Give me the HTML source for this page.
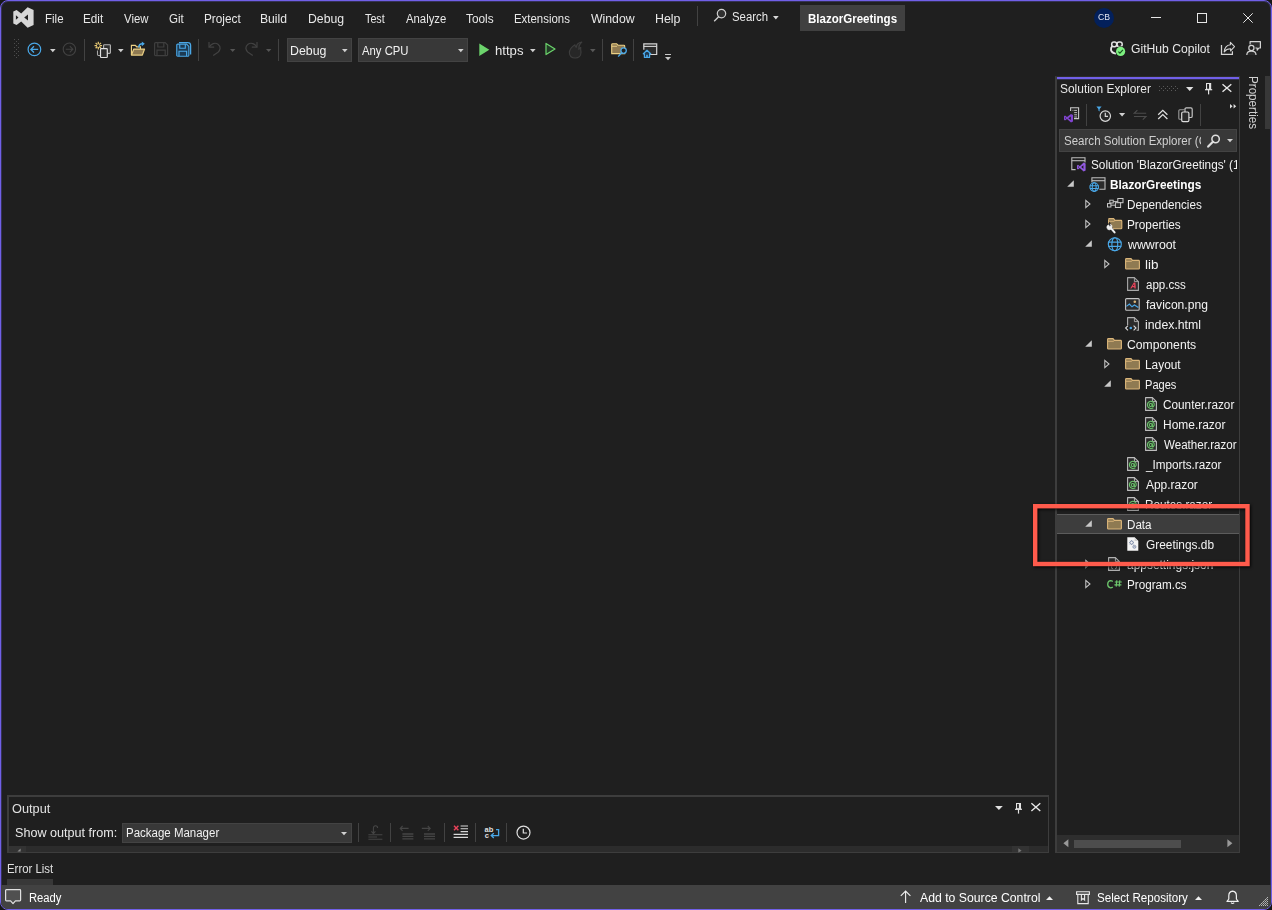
<!DOCTYPE html>
<html lang="en"><head><meta charset="utf-8"><title>BlazorGreetings - Microsoft Visual Studio</title>
<style>
html,body{margin:0;padding:0;background:#171717;}
body{width:1272px;height:910px;position:relative;overflow:hidden;font-family:"Liberation Sans",sans-serif;}
.r{position:absolute;display:block;box-sizing:border-box;}
.t{position:absolute;display:block;white-space:pre;line-height:20px;height:20px;transform-origin:0 50%;}
.clip{position:absolute;height:20px;overflow:hidden;}
svg{overflow:visible;}
</style></head><body>
<div class="r" style="left:0;top:0;width:1272px;height:910px;background:#1f1f1f;border:1px solid #7160e8;border-radius:8px;box-shadow:inset 0 0 0 1px rgba(113,96,232,0.28);"></div>
<svg class="r" style="left:13px;top:7px;" width="21" height="21" viewBox="0 0 21 21"><path fill="#d6d6d6" fill-rule="evenodd" d="M14.6 0.2 L20.6 3 V18 L14.6 20.8 L8.2 14.6 L3.6 18.1 L0.3 16.4 V4.6 L3.6 2.9 L8.2 6.4 Z M2.9 8.3 V12.7 L5.5 10.5 Z M15 7.4 L11.2 10.5 L15 13.6 Z"/></svg>
<span class="t" style="left:44.64px;top:8.84px;font-size:12px;color:#e8e8e8;transform:scaleX(0.9577);">File</span>
<span class="t" style="left:82.82px;top:8.84px;font-size:12px;color:#e8e8e8;transform:scaleX(0.9783);">Edit</span>
<span class="t" style="left:124.08px;top:8.84px;font-size:12px;color:#e8e8e8;transform:scaleX(0.9476);">View</span>
<span class="t" style="left:168.90px;top:8.84px;font-size:12px;color:#e8e8e8;transform:scaleX(0.9641);">Git</span>
<span class="t" style="left:203.92px;top:8.84px;font-size:12px;color:#e8e8e8;transform:scaleX(0.9821);">Project</span>
<span class="t" style="left:260.49px;top:8.84px;font-size:12px;color:#e8e8e8;transform:scaleX(1.0131);">Build</span>
<span class="t" style="left:307.98px;top:8.84px;font-size:12px;color:#e8e8e8;transform:scaleX(1.0201);">Debug</span>
<span class="t" style="left:364.98px;top:8.84px;font-size:12px;color:#e8e8e8;transform:scaleX(0.8971);">Test</span>
<span class="t" style="left:405.70px;top:8.84px;font-size:12px;color:#e8e8e8;transform:scaleX(0.9448);">Analyze</span>
<span class="t" style="left:466.35px;top:8.84px;font-size:12px;color:#e8e8e8;transform:scaleX(0.9863);">Tools</span>
<span class="t" style="left:514.25px;top:8.84px;font-size:12px;color:#e8e8e8;transform:scaleX(0.9516);">Extensions</span>
<span class="t" style="left:590.90px;top:8.84px;font-size:12px;color:#e8e8e8;transform:scaleX(1.0222);">Window</span>
<span class="t" style="left:654.67px;top:8.84px;font-size:12px;color:#e8e8e8;transform:scaleX(1.0335);">Help</span>
<div class="r" style="left:697px;top:6px;width:1px;height:20px;background:#424242;"></div>
<svg class="r" style="left:713px;top:8.4px;" width="15" height="14" viewBox="0 0 15 14"><circle cx="8.5" cy="5.6" r="4.2" fill="#303030" stroke="#d0d0d0" stroke-width="1.2"/><path d="M5.6 8.8 L1.2 13.2" stroke="#d0d0d0" stroke-width="1.3" fill="none"/></svg>
<span class="t" style="left:732.03px;top:7.04px;font-size:12px;color:#e8e8e8;transform:scaleX(0.9469);">Search</span>
<svg class="r" style="left:772.7px;top:15.8px;" width="6" height="4" viewBox="0 0 6 4"><path d="M0 0H5.7L2.85 3.4Z" fill="#d8d8d8"/></svg>
<div class="r" style="left:800px;top:5px;width:105px;height:26px;background:#404040;"></div>
<span class="t" style="left:807.88px;top:9.24px;font-size:12px;color:#ffffff;transform:scaleX(0.9607);font-weight:bold;">BlazorGreetings</span>
<div class="r" style="left:1094px;top:8px;width:20px;height:20px;border-radius:50%;background:#03205b;"></div>
<span class="t" style="left:1097.63px;top:7.31px;font-size:9.2px;color:#e4e8f4;transform:scaleX(0.9432);">CB</span>
<div class="r" style="left:1151px;top:17px;width:10px;height:1px;background:#e6e6e6;"></div>
<div class="r" style="left:1197px;top:13px;width:10px;height:10px;border:1px solid #e6e6e6;"></div>
<svg class="r" style="left:1243px;top:13px;" width="10" height="10" viewBox="0 0 10 10"><path d="M0.3 0.3L9.7 9.7M9.7 0.3L0.3 9.7" stroke="#e6e6e6" stroke-width="1" fill="none"/></svg>
<svg class="r" style="left:14px;top:39px;" width="6" height="20" viewBox="0 0 6 20"><rect x="0" y="0" width="1" height="1" fill="#4d4d4d"/><rect x="4" y="0" width="1" height="1" fill="#4d4d4d"/><rect x="2" y="2" width="1" height="1" fill="#4d4d4d"/><rect x="0" y="4" width="1" height="1" fill="#4d4d4d"/><rect x="4" y="4" width="1" height="1" fill="#4d4d4d"/><rect x="2" y="6" width="1" height="1" fill="#4d4d4d"/><rect x="0" y="8" width="1" height="1" fill="#4d4d4d"/><rect x="4" y="8" width="1" height="1" fill="#4d4d4d"/><rect x="2" y="10" width="1" height="1" fill="#4d4d4d"/><rect x="0" y="12" width="1" height="1" fill="#4d4d4d"/><rect x="4" y="12" width="1" height="1" fill="#4d4d4d"/><rect x="2" y="14" width="1" height="1" fill="#4d4d4d"/><rect x="0" y="16" width="1" height="1" fill="#4d4d4d"/><rect x="4" y="16" width="1" height="1" fill="#4d4d4d"/><rect x="2" y="18" width="1" height="1" fill="#4d4d4d"/></svg>
<svg class="r" style="left:27px;top:42px;" width="15" height="15" viewBox="0 0 15 15"><circle cx="7.4" cy="7.4" r="6.3" fill="none" stroke="#4aa8e8" stroke-width="1.2"/><path d="M11.2 7.4H4M7 4.3L3.9 7.4L7 10.5" fill="none" stroke="#4aa8e8" stroke-width="1.3"/></svg>
<svg class="r" style="left:49.5px;top:48.6px;" width="5.6" height="5" viewBox="0 0 5.6 5"><path d="M0 0H5.6L2.8 3.3Z" fill="#d0d0d0"/></svg>
<svg class="r" style="left:62px;top:42px;" width="15" height="15" viewBox="0 0 15 15"><circle cx="7.4" cy="7.2" r="6.2" fill="none" stroke="#424242" stroke-width="1.1"/><path d="M3.8 7.2H10.8M7.8 4.1L10.9 7.2L7.8 10.3" fill="none" stroke="#424242" stroke-width="1.1"/></svg>
<div class="r" style="left:84px;top:39px;width:1px;height:22px;background:#424242;"></div>
<svg class="r" style="left:94px;top:41px;" width="18" height="18" viewBox="0 0 18 18"><path d="M5.60 4.60L8.10 4.60M5.22 5.52L6.99 7.29M4.30 5.90L4.30 8.40M3.38 5.52L1.61 7.29M3.00 4.60L0.50 4.60M3.38 3.68L1.61 1.91M4.30 3.30L4.30 0.80M5.22 3.68L6.99 1.91" stroke="#e6c873" stroke-width="1.25" fill="none"/>
<rect x="9.6" y="3.7" width="6.8" height="8.6" rx="0.8" fill="#303030" stroke="#b4b4b4" stroke-width="1.15"/>
<path d="M6 14.5H4.4Q3.5 14.5 3.5 13.6V9.4" fill="none" stroke="#a8a8a8" stroke-width="1.1"/>
<rect x="6.5" y="7.7" width="6.8" height="8.8" rx="0.8" fill="#2e2e2e" stroke="#e0e0e0" stroke-width="1.2"/></svg>
<svg class="r" style="left:117.5px;top:48.8px;" width="5.6" height="5" viewBox="0 0 5.6 5"><path d="M0 0H5.6L2.8 3.3Z" fill="#d0d0d0"/></svg>
<svg class="r" style="left:130px;top:41px;" width="17" height="16" viewBox="0 0 17 16"><g transform="translate(0.5,0) scale(0.92,1)"><path d="M1 13.8V4.3H5.2L6.7 5.8H10.8V8" fill="none" stroke="#ecd084" stroke-width="1.25"/><path d="M1 14L3.6 8H15.3L12.9 14Z" fill="#8f7a52" stroke="#ecd084" stroke-width="1.25" stroke-linejoin="round"/></g>
<path d="M8.7 6.4C8.9 3.8 10.2 2.8 12.4 2.8" fill="none" stroke="#4aa8e8" stroke-width="1.5"/><path d="M11.8 0.5L14.8 2.8L11.8 5.2Z" fill="#4aa8e8"/></svg>
<svg class="r" style="left:153.5px;top:42.3px;" width="15" height="15" viewBox="0 0 15 15"><path d="M1.6 0.6H11.2L13.6 3V12.4Q13.6 13.6 12.4 13.6H1.8Q0.6 13.6 0.6 12.4V1.6Q0.6 0.6 1.6 0.6Z" fill="none" stroke="#3f3f3f" stroke-width="1.2"/><path d="M3.8 0.8V5H9.8V0.8" fill="none" stroke="#3f3f3f" stroke-width="1.2"/><path d="M3 13.4V8.2H11.2V13.4" fill="none" stroke="#3f3f3f" stroke-width="1.2"/></svg>
<svg class="r" style="left:176px;top:42px;" width="16" height="16" viewBox="0 0 16 16"><path d="M3 0.7H11.8Q14.6 0.7 14.6 3.5V12.4" fill="none" stroke="#4aa8e8" stroke-width="1.3"/><g transform="translate(0.2,1.6) scale(0.93)"><path d="M1.6 0.6H11.2L13.6 3V12.4Q13.6 13.6 12.4 13.6H1.8Q0.6 13.6 0.6 12.4V1.6Q0.6 0.6 1.6 0.6Z" fill="#1d3a52" stroke="#4aa8e8" stroke-width="1.2"/><path d="M3.8 0.8V5H9.8V0.8" fill="none" stroke="#4aa8e8" stroke-width="1.2"/><path d="M3 13.4V8.2H11.2V13.4" fill="none" stroke="#4aa8e8" stroke-width="1.2"/></g></svg>
<div class="r" style="left:198px;top:39px;width:1px;height:22px;background:#424242;"></div>
<svg class="r" style="left:208px;top:41px;" width="14" height="15" viewBox="0 0 14 15"><path d="M1 1V6.2H6.2" fill="none" stroke="#424242" stroke-width="1.2"/><path d="M1.3 6C3 2.6 7 1.2 10 3.2C13.2 5.6 12.4 9.2 10 11.2L5.2 14.4" fill="none" stroke="#424242" stroke-width="1.2"/></svg>
<svg class="r" style="left:230.3px;top:48.5px;" width="5.4" height="5" viewBox="0 0 5.4 5"><path d="M0 0H5.4L2.7 3Z" fill="#555555"/></svg>
<svg class="r" style="left:244px;top:41px;" width="14" height="15" viewBox="0 0 14 15"><path d="M13 1V6.2H7.8" fill="none" stroke="#424242" stroke-width="1.2"/><path d="M12.7 6C11 2.6 7 1.2 4 3.2C0.8 5.6 1.6 9.2 4 11.2L8.8 14.4" fill="none" stroke="#424242" stroke-width="1.2"/></svg>
<svg class="r" style="left:266.2px;top:48.5px;" width="5.4" height="5" viewBox="0 0 5.4 5"><path d="M0 0H5.4L2.7 3Z" fill="#555555"/></svg>
<div class="r" style="left:278px;top:39px;width:1px;height:22px;background:#424242;"></div>
<div class="r" style="left:287px;top:38px;width:65px;height:24px;background:#383838;border:1px solid #434343;"></div>
<span class="t" style="left:290.37px;top:40.84px;font-size:12px;color:#f1f1f1;transform:scaleX(1.0290);">Debug</span>
<svg class="r" style="left:341.6px;top:48.8px;" width="5.6" height="5" viewBox="0 0 5.6 5"><path d="M0 0H5.6L2.8 3.3Z" fill="#d0d0d0"/></svg>
<div class="r" style="left:358px;top:38px;width:110px;height:24px;background:#383838;border:1px solid #434343;"></div>
<span class="t" style="left:362.30px;top:40.84px;font-size:12px;color:#f1f1f1;transform:scaleX(0.9426);">Any CPU</span>
<svg class="r" style="left:457.6px;top:48.8px;" width="5.6" height="5" viewBox="0 0 5.6 5"><path d="M0 0H5.6L2.8 3.3Z" fill="#d0d0d0"/></svg>
<svg class="r" style="left:479px;top:43px;" width="11" height="14" viewBox="0 0 11 14"><path d="M0.3 0.4V13L10.3 6.7Z" fill="#6cd46c"/></svg>
<span class="t" style="left:495.24px;top:40.84px;font-size:12px;color:#e8e8e8;transform:scaleX(1.0949);">https</span>
<svg class="r" style="left:530px;top:48.8px;" width="5.6" height="5" viewBox="0 0 5.6 5"><path d="M0 0H5.6L2.8 3.3Z" fill="#d0d0d0"/></svg>
<svg class="r" style="left:545px;top:42px;" width="11" height="14" viewBox="0 0 11 14"><path d="M1 1.4V12.6L10 7Z" fill="#223a26" stroke="#6cd46c" stroke-width="1.2" stroke-linejoin="round"/></svg>
<svg class="r" style="left:568px;top:41px;" width="15" height="18" viewBox="0 0 15 18"><path d="M13.8 1C11 1.4 8.6 3.4 8.2 6.4C7.4 5.6 7 4.8 7 3.8C3.6 6 1.2 9 1.4 12C1.6 15 4 17 7.2 17C10.6 17 13 14.8 13 11.6C13 9.6 12.4 8.4 12.8 6.6C11.8 7 11.2 7.6 10.8 8.4C10.6 5.4 11.6 3 13.8 1Z" fill="#272727" stroke="#3e3e3e" stroke-width="1.1" stroke-linejoin="round"/></svg>
<svg class="r" style="left:589.5px;top:48.6px;" width="5.6" height="5" viewBox="0 0 5.6 5"><path d="M0 0H5.6L2.8 3.3Z" fill="#585858"/></svg>
<div class="r" style="left:602px;top:39px;width:1px;height:22px;background:#424242;"></div>
<svg class="r" style="left:611px;top:43px;" width="17" height="15" viewBox="0 0 17 15"><path d="M0.7 1.6Q0.7 0.7 1.6 0.7H5.6L7 2.2H12.8Q13.7 2.2 13.7 3.1V10.6H0.7Z" fill="#8f7a52" stroke="#ecd084" stroke-width="1.1"/><path d="M0.8 3.3H6" stroke="#ecd084" stroke-width="0.9"/>
<circle cx="12.6" cy="7.6" r="2.7" fill="#1f1f1f" stroke="#4aa8e8" stroke-width="1.3"/><path d="M10.6 9.8L7.2 13.6" stroke="#4aa8e8" stroke-width="1.4"/></svg>
<div class="r" style="left:633px;top:39px;width:1px;height:22px;background:#424242;"></div>
<svg class="r" style="left:643px;top:43px;" width="15" height="16" viewBox="0 0 15 16"><path d="M6.5 11.5H13.7V0.9H0.8V6.8" fill="#2c2c2c" stroke="#d4d4d4" stroke-width="1.2"/><path d="M0.8 3.4H13.7" stroke="#d4d4d4" stroke-width="1.1"/>
<path d="M0.3 10.8L4 7.2L7.7 10.8H6.6V14.4H1.4V10.8Z" fill="#1f3a52" stroke="#4aa8e8" stroke-width="1.2" stroke-linejoin="round"/><rect x="3.2" y="11.8" width="1.6" height="2.6" fill="#4aa8e8"/></svg>
<div class="r" style="left:664.5px;top:54px;width:6px;height:1px;background:#c8c8c8;"></div>
<svg class="r" style="left:664.5px;top:56.5px;" width="6" height="5" viewBox="0 0 6 5"><path d="M0 0H6L3.0 3.2Z" fill="#c8c8c8"/></svg>
<svg class="r" style="left:1110px;top:41px;" width="16" height="16" viewBox="0 0 16 16"><g fill="none" stroke="#e4e4e4" stroke-width="1.5"><rect x="1.7" y="1" width="5" height="4.8" rx="2.2"/><rect x="7" y="1" width="5.2" height="4.8" rx="2.2"/><path d="M2.2 5.2C1 6.4 0.9 7.8 1 9C1.4 11 3.4 12.2 6 12.6" stroke-width="1.9"/></g>
<circle cx="10.6" cy="10.4" r="5.1" fill="#1f1f1f"/><circle cx="10.6" cy="10.4" r="4.6" fill="#7df080"/><path d="M8.4 10.6L9.9 12.1L12.9 8.8" fill="none" stroke="#17501c" stroke-width="1.15"/></svg>
<span class="t" style="left:1131.17px;top:39.04px;font-size:12px;color:#e8e8e8;transform:scaleX(1.0120);">GitHub Copilot</span>
<svg class="r" style="left:1220px;top:41px;" width="16" height="15" viewBox="0 0 16 15"><path d="M1.5 4V13.3H12.4V10.2" fill="none" stroke="#d4d4d4" stroke-width="1.25"/><path d="M4.2 10.8C4.6 6.6 7 4 10.4 3.7V1.3L14.5 5.6L10.6 9.9V7.8C8 7.8 5.8 8.7 4.2 10.8Z" fill="none" stroke="#d4d4d4" stroke-width="1.1" stroke-linejoin="round"/></svg>
<svg class="r" style="left:1246px;top:40px;" width="16" height="16" viewBox="0 0 16 16"><path d="M4.1 4.6V1.6H14.4V8H12.9L11.2 10.2V8H9.4" fill="#2b2b2b" stroke="#d4d4d4" stroke-width="1.2" stroke-linejoin="round"/><circle cx="5.4" cy="7.9" r="2.6" fill="#1f1f1f" stroke="#d4d4d4" stroke-width="1.2"/><path d="M0.8 14.9C0.8 12.2 2.6 11.1 5.4 11.1C8.2 11.1 10 12.2 10 14.9" fill="#2b2b2b" stroke="#d4d4d4" stroke-width="1.2"/></svg>
<div class="r" style="left:1055px;top:76px;width:185px;height:777px;border:1px solid #3d3d3d;border-left-width:2px;border-top-color:#2c2c2c;"></div>
<div class="r" style="left:1057px;top:77px;width:182px;height:2px;background:#7160e8;"></div>
<div class="r" style="left:1057px;top:79px;width:182px;height:1px;background:rgba(113,96,232,0.25);"></div>
<span class="t" style="left:1060.30px;top:79.04px;font-size:12px;color:#e8e8e8;transform:scaleX(0.9942);">Solution Explorer</span>
<svg class="r" style="left:1159px;top:86px;" width="20" height="6" viewBox="0 0 20 6"><rect x="0" y="0" width="1" height="1" fill="#5a5a5a"/><rect x="4" y="0" width="1" height="1" fill="#5a5a5a"/><rect x="8" y="0" width="1" height="1" fill="#5a5a5a"/><rect x="12" y="0" width="1" height="1" fill="#5a5a5a"/><rect x="16" y="0" width="1" height="1" fill="#5a5a5a"/><rect x="2" y="2" width="1" height="1" fill="#5a5a5a"/><rect x="6" y="2" width="1" height="1" fill="#5a5a5a"/><rect x="10" y="2" width="1" height="1" fill="#5a5a5a"/><rect x="14" y="2" width="1" height="1" fill="#5a5a5a"/><rect x="18" y="2" width="1" height="1" fill="#5a5a5a"/><rect x="0" y="4" width="1" height="1" fill="#5a5a5a"/><rect x="4" y="4" width="1" height="1" fill="#5a5a5a"/><rect x="8" y="4" width="1" height="1" fill="#5a5a5a"/><rect x="12" y="4" width="1" height="1" fill="#5a5a5a"/><rect x="16" y="4" width="1" height="1" fill="#5a5a5a"/></svg>
<svg class="r" style="left:1186.2px;top:86.8px;" width="7.4" height="5" viewBox="0 0 7.4 5"><path d="M0 0H7.4L3.7 4Z" fill="#e0e0e0"/></svg>
<svg class="r" style="left:1205px;top:82.8px;" width="7.2" height="12.4" viewBox="0 0 7.2 12.4"><path d="M1.55 0.55H5.65V6.2H1.55Z" fill="none" stroke="#e4e4e4" stroke-width="1.1"/><path d="M4.9 0.4V6.2" stroke="#e4e4e4" stroke-width="1.7"/><path d="M0 6.7H7.2" stroke="#e4e4e4" stroke-width="1.2"/><path d="M3.6 6.7V11.4" stroke="#e4e4e4" stroke-width="1.2"/></svg>
<svg class="r" style="left:1221.7px;top:84px;" width="10" height="8" viewBox="0 0 10 8"><path d="M0.5 0.3L9.3 7.8M9.3 0.3L0.5 7.8" stroke="#e8e8e8" stroke-width="1.35" fill="none"/></svg>
<svg class="r" style="left:1063px;top:106px;" width="17" height="18" viewBox="0 0 17 18"><path d="M7.6 5V1.8H15.6V12.6H11" fill="#262626" stroke="#c8c8c8" stroke-width="1.1"/><path d="M9.6 4.4H10.4M11.2 4.4H14M11.2 6.6H14M11.2 8.8H14M11.2 11H14" stroke="#c8c8c8" stroke-width="0.9"/>
<path d="M8 8L10 9V15.6L8 16.6L4 13L2 14.4L1 13.8V10.2L2 9.6L4 11Z M7.8 10.6L5.4 12.3L7.8 14Z M2 11.3V12.9L3 12.1Z" fill="#8044d0" fill-rule="evenodd"/></svg>
<div class="r" style="left:1086px;top:104px;width:1px;height:22px;background:#424242;"></div>
<svg class="r" style="left:1096px;top:106px;" width="16" height="17" viewBox="0 0 16 17"><path d="M0.4 0.6H5.6L3.6 3V5.4L2.4 4.6V3Z" fill="#4aa8e8"/><circle cx="9.3" cy="10.1" r="5.2" fill="#282828" stroke="#d8d8d8" stroke-width="1.2"/><path d="M9.3 6.8V10.3H12" fill="none" stroke="#d8d8d8" stroke-width="1.2"/></svg>
<svg class="r" style="left:1119px;top:113px;" width="6.2" height="5" viewBox="0 0 6.2 5"><path d="M0 0H6.2L3.1 3.5Z" fill="#d0d0d0"/></svg>
<svg class="r" style="left:1133px;top:109px;" width="15" height="12" viewBox="0 0 15 12"><path d="M13.2 4.3H1.2L4.4 1.2" fill="none" stroke="#4c4c4c" stroke-width="1.1"/><path d="M1 7.5H13L9.8 10.6" fill="none" stroke="#4c4c4c" stroke-width="1.1"/></svg>
<svg class="r" style="left:1157px;top:109px;" width="12" height="12" viewBox="0 0 12 12"><path d="M1.2 5.8L5.8 1.4L10.4 5.8M1.2 10L5.8 5.6L10.4 10" fill="none" stroke="#e0e0e0" stroke-width="1.25"/></svg>
<svg class="r" style="left:1178px;top:107px;" width="16" height="16" viewBox="0 0 16 16"><path d="M3.6 12.2H1.8Q0.8 12.2 0.8 11.2V3.8Q0.8 2.8 1.8 2.8H6.4" fill="none" stroke="#9a9a9a" stroke-width="1.1"/><rect x="7" y="0.9" width="7.2" height="9.6" rx="1.3" fill="#1f1f1f" stroke="#c4c4c4" stroke-width="1.2"/><rect x="3.7" y="5" width="7.2" height="9.6" rx="1.3" fill="#2c2c2c" stroke="#dcdcdc" stroke-width="1.2"/></svg>
<div class="r" style="left:1200px;top:104px;width:1px;height:22px;background:#424242;"></div>
<svg class="r" style="left:1230px;top:104px;" width="7" height="5" viewBox="0 0 7 5"><path d="M0 0L2.6 2.2L0 4.4ZM3.6 0L6.2 2.2L3.6 4.4Z" fill="#e0e0e0"/></svg>
<div class="r" style="left:1059px;top:129px;width:178px;height:23px;background:#383838;border:1px solid #434343;"></div>
<div class="clip" style="left:1063.72px;top:131.04px;width:137.40px;"><span class="t" style="left:0;top:0;font-size:12px;color:#d0d0d0;transform:scaleX(0.9613);">Search Solution Explorer (Ctrl+;)</span></div>
<svg class="r" style="left:1207px;top:134px;" width="14" height="14" viewBox="0 0 14 14"><circle cx="8.6" cy="5" r="3.7" fill="none" stroke="#e0e0e0" stroke-width="1.5"/><path d="M5.9 7.8L1.2 12.6" stroke="#e0e0e0" stroke-width="2.2" stroke-linecap="round"/></svg>
<svg class="r" style="left:1227px;top:139.2px;" width="6" height="5" viewBox="0 0 6 5"><path d="M0 0H6L3.0 3.3Z" fill="#d0d0d0"/></svg>
<span class="t" style="left:1247px;top:76.4px;font-size:12px;color:#d0d0d0;line-height:12px;height:12px;writing-mode:vertical-rl;transform-origin:0 0;transform:scaleY(0.97);width:12px;height:auto;">Properties</span>
<div class="r" style="left:1265px;top:76px;width:6px;height:53px;background:#383838;"></div>
<div class="r" style="left:1057px;top:514px;width:182px;height:20px;background:#3d3d3d;border-top:1px solid #5c5c5c;border-bottom:1px solid #5c5c5c;"></div>
<svg class="r" style="left:1071px;top:157px;" width="16" height="15" viewBox="0 0 16 15"><path d="M4.6 12.6H0.8V0.8H14V5.4" fill="none" stroke="#bdbdbd" stroke-width="1.1"/><path d="M0.8 3.7H14" stroke="#bdbdbd" stroke-width="1.1"/><path d="M12.6 5.6L14.6 6.6V13.6L12.6 14.6L8.8 11L7 12.4L6 11.8V8.4L7 7.8L8.8 9.2Z M12.4 8.3L10.2 10.1L12.4 11.9Z M7 9.3V10.9L7.9 10.1Z" fill="#9159e0" fill-rule="evenodd"/></svg>
<div class="clip" style="left:1091.21px;top:155.24px;width:145.90px;"><span class="t" style="left:0;top:0;font-size:12px;color:#f3f3f3;transform:scaleX(0.9819);">Solution &#x27;BlazorGreetings&#x27; (1 of 1 project)</span></div>
<svg class="r" style="left:1067.3px;top:180.2px;" width="7" height="7" viewBox="0 0 7 7"><path d="M6.8 0.2V6.8H0.2Z" fill="#c8c8c8"/></svg>
<svg class="r" style="left:1088.5px;top:177px;" width="17" height="16" viewBox="0 0 17 16"><path d="M2.9 5.6V0.8H16V12.2H10.4" fill="#2b2b2b" stroke="#bdbdbd" stroke-width="1.1"/><path d="M2.9 3.7H16" stroke="#bdbdbd" stroke-width="1.1"/><circle cx="5.2" cy="10.1" r="5.2" fill="#1f1f1f"/><g fill="none" stroke="#4aa8e8" stroke-width="1.1"><circle cx="5.2" cy="10.1" r="4.3"/><ellipse cx="5.2" cy="10.1" rx="1.935" ry="4.3"/><path d="M0.9000000000000004 8.681H9.5M0.9000000000000004 11.519H9.5"/></g></svg>
<span class="t" style="left:1109.76px;top:175.24px;font-size:12px;color:#ffffff;transform:scaleX(0.9847);font-weight:bold;">BlazorGreetings</span>
<svg class="r" style="left:1085.3px;top:198.7px;" width="7" height="10" viewBox="0 0 7 10"><path d="M0.8 1.3V8.7L5 5Z" fill="none" stroke="#c8c8c8" stroke-width="1.05" stroke-linejoin="miter"/></svg>
<svg class="r" style="left:1106.8px;top:198px;" width="17" height="10" viewBox="0 0 17 10"><g fill="none" stroke="#c8c8c8" stroke-width="1"><rect x="10.8" y="0.5" width="5.2" height="4.2"/><rect x="2.8" y="2.2" width="3.4" height="2.8"/><rect x="0.5" y="5.6" width="3.4" height="3.4"/><rect x="8.4" y="4.7" width="5.2" height="4.8" fill="#2b2b2b"/><path d="M3.9 7.2H8.4M6.2 3.6H10.8"/></g></svg>
<span class="t" style="left:1126.82px;top:195.24px;font-size:12px;color:#f3f3f3;transform:scaleX(0.9751);">Dependencies</span>
<svg class="r" style="left:1085.3px;top:218.7px;" width="7" height="10" viewBox="0 0 7 10"><path d="M0.8 1.3V8.7L5 5Z" fill="none" stroke="#c8c8c8" stroke-width="1.05" stroke-linejoin="miter"/></svg>
<svg class="r" style="left:1106.8px;top:218px;" width="16" height="15" viewBox="0 0 16 15"><path d="M1.6 1.4Q1.6 0.6 2.4 0.6H6.6L8 2.4H14Q14.8 2.4 14.8 3.2V10Q14.8 10.8 14 10.8H6" fill="#8f7a52" stroke="#dcb67a" stroke-width="1.1"/><path d="M1.6 5.4V1.4" stroke="#dcb67a" stroke-width="1.1"/><path d="M1.8 3.3H7L8 2.4" fill="none" stroke="#dcb67a" stroke-width="0.9"/><g transform="translate(-0.6,1.6)"><path d="M5.6 7.6A2.6 2.6 0 1 1 2.2 5.2L3.2 7L4.6 6.2L3.8 4.6A2.6 2.6 0 0 1 5.6 7.6Z" fill="#f0f0f0" stroke="#f0f0f0" stroke-width="0.6"/><path d="M4.4 8.4L8.2 12.8" stroke="#f0f0f0" stroke-width="2" stroke-linecap="round"/></g></svg>
<span class="t" style="left:1126.82px;top:215.24px;font-size:12px;color:#f3f3f3;transform:scaleX(0.9817);">Properties</span>
<svg class="r" style="left:1085.3px;top:240.2px;" width="7" height="7" viewBox="0 0 7 7"><path d="M6.8 0.2V6.8H0.2Z" fill="#c8c8c8"/></svg>
<svg class="r" style="left:1106.8px;top:237px;" width="16" height="16" viewBox="0 0 16 16"><g fill="none" stroke="#4aa8e8" stroke-width="1.15"><circle cx="7.8" cy="7.2" r="6.5"/><ellipse cx="7.8" cy="7.2" rx="2.9250000000000003" ry="6.5"/><path d="M1.2999999999999998 5.055H14.3M1.2999999999999998 9.345H14.3"/></g></svg>
<span class="t" style="left:1127.80px;top:235.24px;font-size:12px;color:#f3f3f3;transform:scaleX(1.0295);">wwwroot</span>
<svg class="r" style="left:1103.5px;top:258.7px;" width="7" height="10" viewBox="0 0 7 10"><path d="M0.8 1.3V8.7L5 5Z" fill="none" stroke="#c8c8c8" stroke-width="1.05" stroke-linejoin="miter"/></svg>
<svg class="r" style="left:1125.4px;top:258px;" width="16" height="12" viewBox="0 0 16 12"><path d="M0.6 1.4Q0.6 0.6 1.4 0.6H6L7.4 2.4H13.6Q14.4 2.4 14.4 3.2V10.2Q14.4 11 13.6 11H1.4Q0.6 11 0.6 10.2Z" fill="#8f7a52" stroke="#dcb67a" stroke-width="1.1"/><path d="M0.8 3.3H6.4L7.4 2.4" fill="none" stroke="#dcb67a" stroke-width="0.9"/></svg>
<span class="t" style="left:1145.36px;top:255.24px;font-size:12px;color:#f3f3f3;transform:scaleX(1.1163);">lib</span>
<svg class="r" style="left:1126.9px;top:277.3px;" width="12" height="14" viewBox="0 0 12 14"><path d="M0.6 0.6H7.4L11.4 4.6V13.4H0.6Z" fill="#2b2b2b" stroke="#a8a8a8" stroke-width="1.1" stroke-linejoin="round"/><path d="M7.4 0.6V4.6H11.4" fill="none" stroke="#a8a8a8" stroke-width="0.9"/><path d="M3.2 11.6L6.8 5.6H8.4L8.8 11.6H7.4L7.3 10.2H5.2L4.5 11.6ZM5.9 9.1H7.2L7.1 7.1Z" fill="#e8435a"/></svg>
<span class="t" style="left:1145.72px;top:275.24px;font-size:12px;color:#f3f3f3;transform:scaleX(0.9630);">app.css</span>
<svg class="r" style="left:1125.4px;top:298px;" width="15" height="13" viewBox="0 0 15 13"><rect x="0.6" y="0.6" width="13.6" height="11.6" rx="1" fill="#2b2b2b" stroke="#c4c4c4" stroke-width="1.1"/><circle cx="9.8" cy="3.8" r="1.3" fill="#dcb67a"/><path d="M1.4 8.4L4.4 6L7 8.8L9.4 7L13.4 9.6" fill="none" stroke="#4aa8e8" stroke-width="1.2"/></svg>
<span class="t" style="left:1146.07px;top:295.24px;font-size:12px;color:#f3f3f3;transform:scaleX(1.0083);">favicon.png</span>
<svg class="r" style="left:1124.9px;top:317.4px;" width="14" height="14" viewBox="0 0 14 14"><g transform="translate(2,0)"><path d="M0.6 8V0.6H7.4L11.4 4.6V13.2H9.6" fill="#2b2b2b" stroke="#b0b0b0" stroke-width="1.1" stroke-linejoin="round"/><path d="M7.4 0.6V4.6H11.4" fill="none" stroke="#b0b0b0" stroke-width="0.9"/></g><path d="M3 8.6L0.6 11L3 13.4M8.6 8.6L11 11L8.6 13.4" fill="none" stroke="#d8d8d8" stroke-width="1.1"/><circle cx="5.8" cy="11" r="1.3" fill="#4aa8e8"/></svg>
<span class="t" style="left:1145.43px;top:315.24px;font-size:12px;color:#f3f3f3;transform:scaleX(1.0240);">index.html</span>
<svg class="r" style="left:1085.3px;top:340.20000000000005px;" width="7" height="7" viewBox="0 0 7 7"><path d="M6.8 0.2V6.8H0.2Z" fill="#c8c8c8"/></svg>
<svg class="r" style="left:1106.8px;top:338px;" width="16" height="12" viewBox="0 0 16 12"><path d="M0.6 1.4Q0.6 0.6 1.4 0.6H6L7.4 2.4H13.6Q14.4 2.4 14.4 3.2V10.2Q14.4 11 13.6 11H1.4Q0.6 11 0.6 10.2Z" fill="#8f7a52" stroke="#dcb67a" stroke-width="1.1"/><path d="M0.8 3.3H6.4L7.4 2.4" fill="none" stroke="#dcb67a" stroke-width="0.9"/></svg>
<span class="t" style="left:1127.16px;top:335.24px;font-size:12px;color:#f3f3f3;transform:scaleX(1.0164);">Components</span>
<svg class="r" style="left:1103.5px;top:358.7px;" width="7" height="10" viewBox="0 0 7 10"><path d="M0.8 1.3V8.7L5 5Z" fill="none" stroke="#c8c8c8" stroke-width="1.05" stroke-linejoin="miter"/></svg>
<svg class="r" style="left:1125.4px;top:358px;" width="16" height="12" viewBox="0 0 16 12"><path d="M0.6 1.4Q0.6 0.6 1.4 0.6H6L7.4 2.4H13.6Q14.4 2.4 14.4 3.2V10.2Q14.4 11 13.6 11H1.4Q0.6 11 0.6 10.2Z" fill="#8f7a52" stroke="#dcb67a" stroke-width="1.1"/><path d="M0.8 3.3H6.4L7.4 2.4" fill="none" stroke="#dcb67a" stroke-width="0.9"/></svg>
<span class="t" style="left:1145.21px;top:355.24px;font-size:12px;color:#f3f3f3;transform:scaleX(0.9886);">Layout</span>
<svg class="r" style="left:1103.5px;top:380.20000000000005px;" width="7" height="7" viewBox="0 0 7 7"><path d="M6.8 0.2V6.8H0.2Z" fill="#c8c8c8"/></svg>
<svg class="r" style="left:1125.4px;top:378px;" width="16" height="12" viewBox="0 0 16 12"><path d="M0.6 1.4Q0.6 0.6 1.4 0.6H6L7.4 2.4H13.6Q14.4 2.4 14.4 3.2V10.2Q14.4 11 13.6 11H1.4Q0.6 11 0.6 10.2Z" fill="#8f7a52" stroke="#dcb67a" stroke-width="1.1"/><path d="M0.8 3.3H6.4L7.4 2.4" fill="none" stroke="#dcb67a" stroke-width="0.9"/></svg>
<span class="t" style="left:1145.28px;top:375.24px;font-size:12px;color:#f3f3f3;transform:scaleX(0.9226);">Pages</span>
<svg class="r" style="left:1144.8000000000002px;top:397px;" width="12" height="14" viewBox="0 0 12 14"><path d="M0.6 0.6H7.4L11.4 4.6V13.4H0.6Z" fill="#2b2b2b" stroke="#bdbdbd" stroke-width="1.1" stroke-linejoin="round"/><path d="M7.4 0.6V4.6H11.4" fill="none" stroke="#bdbdbd" stroke-width="0.9"/><g fill="none" stroke="#6cc56c" stroke-width="1.05"><circle cx="5.7" cy="8" r="1.5"/><path d="M7.3 6.4V8.8Q7.6 9.9 8.6 9.3Q9.6 8.2 9.1 6.4Q8 4.2 5.6 4.3Q2.6 4.6 2.4 7.8Q2.6 11.2 5.8 11.4Q7.4 11.4 8.4 10.8"/></g></svg>
<span class="t" style="left:1162.89px;top:395.24px;font-size:12px;color:#f3f3f3;transform:scaleX(0.9809);">Counter.razor</span>
<svg class="r" style="left:1144.8000000000002px;top:417px;" width="12" height="14" viewBox="0 0 12 14"><path d="M0.6 0.6H7.4L11.4 4.6V13.4H0.6Z" fill="#2b2b2b" stroke="#bdbdbd" stroke-width="1.1" stroke-linejoin="round"/><path d="M7.4 0.6V4.6H11.4" fill="none" stroke="#bdbdbd" stroke-width="0.9"/><g fill="none" stroke="#6cc56c" stroke-width="1.05"><circle cx="5.7" cy="8" r="1.5"/><path d="M7.3 6.4V8.8Q7.6 9.9 8.6 9.3Q9.6 8.2 9.1 6.4Q8 4.2 5.6 4.3Q2.6 4.6 2.4 7.8Q2.6 11.2 5.8 11.4Q7.4 11.4 8.4 10.8"/></g></svg>
<span class="t" style="left:1162.50px;top:415.24px;font-size:12px;color:#f3f3f3;transform:scaleX(0.9967);">Home.razor</span>
<svg class="r" style="left:1144.8000000000002px;top:437px;" width="12" height="14" viewBox="0 0 12 14"><path d="M0.6 0.6H7.4L11.4 4.6V13.4H0.6Z" fill="#2b2b2b" stroke="#bdbdbd" stroke-width="1.1" stroke-linejoin="round"/><path d="M7.4 0.6V4.6H11.4" fill="none" stroke="#bdbdbd" stroke-width="0.9"/><g fill="none" stroke="#6cc56c" stroke-width="1.05"><circle cx="5.7" cy="8" r="1.5"/><path d="M7.3 6.4V8.8Q7.6 9.9 8.6 9.3Q9.6 8.2 9.1 6.4Q8 4.2 5.6 4.3Q2.6 4.6 2.4 7.8Q2.6 11.2 5.8 11.4Q7.4 11.4 8.4 10.8"/></g></svg>
<span class="t" style="left:1163.50px;top:435.24px;font-size:12px;color:#f3f3f3;transform:scaleX(0.9656);">Weather.razor</span>
<svg class="r" style="left:1126.8000000000002px;top:457px;" width="12" height="14" viewBox="0 0 12 14"><path d="M0.6 0.6H7.4L11.4 4.6V13.4H0.6Z" fill="#2b2b2b" stroke="#bdbdbd" stroke-width="1.1" stroke-linejoin="round"/><path d="M7.4 0.6V4.6H11.4" fill="none" stroke="#bdbdbd" stroke-width="0.9"/><g fill="none" stroke="#6cc56c" stroke-width="1.05"><circle cx="5.7" cy="8" r="1.5"/><path d="M7.3 6.4V8.8Q7.6 9.9 8.6 9.3Q9.6 8.2 9.1 6.4Q8 4.2 5.6 4.3Q2.6 4.6 2.4 7.8Q2.6 11.2 5.8 11.4Q7.4 11.4 8.4 10.8"/></g></svg>
<span class="t" style="left:1146.44px;top:455.24px;font-size:12px;color:#f3f3f3;transform:scaleX(0.9758);">_Imports.razor</span>
<svg class="r" style="left:1126.8000000000002px;top:477px;" width="12" height="14" viewBox="0 0 12 14"><path d="M0.6 0.6H7.4L11.4 4.6V13.4H0.6Z" fill="#2b2b2b" stroke="#bdbdbd" stroke-width="1.1" stroke-linejoin="round"/><path d="M7.4 0.6V4.6H11.4" fill="none" stroke="#bdbdbd" stroke-width="0.9"/><g fill="none" stroke="#6cc56c" stroke-width="1.05"><circle cx="5.7" cy="8" r="1.5"/><path d="M7.3 6.4V8.8Q7.6 9.9 8.6 9.3Q9.6 8.2 9.1 6.4Q8 4.2 5.6 4.3Q2.6 4.6 2.4 7.8Q2.6 11.2 5.8 11.4Q7.4 11.4 8.4 10.8"/></g></svg>
<span class="t" style="left:1146.20px;top:475.24px;font-size:12px;color:#f3f3f3;transform:scaleX(0.9952);">App.razor</span>
<svg class="r" style="left:1126.8000000000002px;top:497px;" width="12" height="14" viewBox="0 0 12 14"><path d="M0.6 0.6H7.4L11.4 4.6V13.4H0.6Z" fill="#2b2b2b" stroke="#bdbdbd" stroke-width="1.1" stroke-linejoin="round"/><path d="M7.4 0.6V4.6H11.4" fill="none" stroke="#bdbdbd" stroke-width="0.9"/><g fill="none" stroke="#6cc56c" stroke-width="1.05"><circle cx="5.7" cy="8" r="1.5"/><path d="M7.3 6.4V8.8Q7.6 9.9 8.6 9.3Q9.6 8.2 9.1 6.4Q8 4.2 5.6 4.3Q2.6 4.6 2.4 7.8Q2.6 11.2 5.8 11.4Q7.4 11.4 8.4 10.8"/></g></svg>
<span class="t" style="left:1145.22px;top:495.24px;font-size:12px;color:#f3f3f3;transform:scaleX(0.9778);">Routes.razor</span>
<svg class="r" style="left:1085.3px;top:520.2px;" width="7" height="7" viewBox="0 0 7 7"><path d="M6.8 0.2V6.8H0.2Z" fill="#c8c8c8"/></svg>
<svg class="r" style="left:1106.8px;top:518px;" width="16" height="12" viewBox="0 0 16 12"><path d="M0.6 1.4Q0.6 0.6 1.4 0.6H6L7.4 2.4H13.6Q14.4 2.4 14.4 3.2V10.2Q14.4 11 13.6 11H1.4Q0.6 11 0.6 10.2Z" fill="#8f7a52" stroke="#dcb67a" stroke-width="1.1"/><path d="M0.8 3.3H6.4L7.4 2.4" fill="none" stroke="#dcb67a" stroke-width="0.9"/></svg>
<span class="t" style="left:1126.83px;top:515.24px;font-size:12px;color:#f3f3f3;transform:scaleX(0.9691);">Data</span>
<svg class="r" style="left:1126.9px;top:537px;" width="12" height="14" viewBox="0 0 12 14"><path d="M0.3 0.3H7.6L11.3 4V13.7H0.3Z" fill="#f4f4f4"/><path d="M7.6 0.3V4H11.3" fill="#d0d0d0"/><g fill="none" stroke="#7c8aa8" stroke-width="0.9"><circle cx="4.6" cy="5.6" r="1.6"/><path d="M4.6 3.2V4M4.6 7.2V8M2.2 5.6H3M6.2 5.6H7M2.9 3.9L3.5 4.5M5.7 6.7L6.3 7.3M6.3 3.9L5.7 4.5M3.5 6.7L2.9 7.3"/><circle cx="7.4" cy="9.8" r="1.5"/><path d="M6.6 9.8H8.2"/></g></svg>
<span class="t" style="left:1145.58px;top:535.24px;font-size:12px;color:#f3f3f3;transform:scaleX(0.9896);">Greetings.db</span>
<svg class="r" style="left:1085.3px;top:558.7px;" width="7" height="10" viewBox="0 0 7 10"><path d="M0.8 1.3V8.7L5 5Z" fill="none" stroke="#c8c8c8" stroke-width="1.05" stroke-linejoin="miter"/></svg>
<svg class="r" style="left:1108.3px;top:557px;" width="12" height="14" viewBox="0 0 12 14"><path d="M0.6 0.6H7.4L11.4 4.6V13.4H0.6Z" fill="#2b2b2b" stroke="#b0b0b0" stroke-width="1.1" stroke-linejoin="round"/><path d="M7.4 0.6V4.6H11.4" fill="none" stroke="#b0b0b0" stroke-width="0.9"/><path d="M4.6 6.6Q3.6 6.6 3.6 7.6V8.4Q3.6 9 3 9Q3.6 9 3.6 9.6V10.6Q3.6 11.6 4.6 11.6M7.4 6.6Q8.4 6.6 8.4 7.6V8.4Q8.4 9 9 9Q8.4 9 8.4 9.6V10.6Q8.4 11.6 7.4 11.6" fill="none" stroke="#d0d0d0" stroke-width="0.9"/></svg>
<span class="t" style="left:1127.30px;top:555.24px;font-size:12px;color:#f3f3f3;transform:scaleX(0.9956);">appsettings.json</span>
<svg class="r" style="left:1085.3px;top:578.7px;" width="7" height="10" viewBox="0 0 7 10"><path d="M0.8 1.3V8.7L5 5Z" fill="none" stroke="#c8c8c8" stroke-width="1.05" stroke-linejoin="miter"/></svg>
<svg class="r" style="left:1106.8px;top:580px;" width="16" height="9" viewBox="0 0 16 9"><path d="M5.8 1.4Q4.8 0.6 3.6 0.6Q0.8 0.8 0.7 4.2Q0.8 7.6 3.6 7.8Q4.8 7.8 5.8 7" fill="none" stroke="#6cc56c" stroke-width="1.3"/><path d="M9.8 0.2L9.2 6.6M12.8 0.2L12.2 6.6M7.8 2H14.8M7.4 4.8H14.4" fill="none" stroke="#6cc56c" stroke-width="1.2"/></svg>
<span class="t" style="left:1126.83px;top:575.24px;font-size:12px;color:#f3f3f3;transform:scaleX(0.9733);">Program.cs</span>
<svg class="r" style="left:1025px;top:496px;filter:drop-shadow(1.2px 1.2px 1.6px rgba(0,0,0,0.95));" width="240" height="84" viewBox="0 0 240 84"><rect x="10.2" y="10.2" width="212.3" height="57.8" fill="none" stroke="#ff5b4c" stroke-width="4.4"/></svg>
<div class="r" style="left:1057px;top:835px;width:182px;height:17px;background:#2e2e2e;"></div>
<svg class="r" style="left:1063px;top:839px;" width="6" height="9" viewBox="0 0 6 9"><path d="M5.4 0.3V8.3L0.4 4.3Z" fill="#999"/></svg>
<div class="r" style="left:1074px;top:839.5px;width:107px;height:8px;background:#4d4d4d;"></div>
<svg class="r" style="left:1227px;top:839px;" width="6" height="9" viewBox="0 0 6 9"><path d="M0.4 0.3V8.3L5.4 4.3Z" fill="#999"/></svg>
<div class="r" style="left:7px;top:795px;width:1042px;height:58px;border:1px solid #3d3d3d;border-left-width:2px;border-top-width:2px;"></div>
<span class="t" style="left:12.37px;top:799.04px;font-size:12px;color:#e0e0e0;transform:scaleX(1.0620);">Output</span>
<svg class="r" style="left:995.4px;top:806px;" width="7.8" height="5" viewBox="0 0 7.8 5"><path d="M0 0H7.8L3.9 4Z" fill="#e0e0e0"/></svg>
<svg class="r" style="left:1014.7px;top:802.7px;" width="7" height="11.6" viewBox="0 0 7 11.6"><path d="M1.55 0.55H5.45V5.8H1.55Z" fill="none" stroke="#e4e4e4" stroke-width="1.1"/><path d="M4.7 0.4V5.8" stroke="#e4e4e4" stroke-width="1.7"/><path d="M0 6.3H7" stroke="#e4e4e4" stroke-width="1.2"/><path d="M3.5 6.3V10.6" stroke="#e4e4e4" stroke-width="1.2"/></svg>
<svg class="r" style="left:1031px;top:803px;" width="10" height="9" viewBox="0 0 10 9"><path d="M0.4 0.3L9.3 8.1M9.3 0.3L0.4 8.1" stroke="#e8e8e8" stroke-width="1.35" fill="none"/></svg>
<span class="t" style="left:14.87px;top:823.04px;font-size:12px;color:#e8e8e8;transform:scaleX(1.0507);">Show output from:</span>
<div class="r" style="left:122px;top:823px;width:230px;height:20px;background:#383838;border:1px solid #434343;"></div>
<span class="t" style="left:125.64px;top:823.04px;font-size:12px;color:#f1f1f1;transform:scaleX(0.9571);">Package Manager</span>
<svg class="r" style="left:341.3px;top:832px;" width="6" height="5" viewBox="0 0 6 5"><path d="M0 0H6L3.0 3.3Z" fill="#d0d0d0"/></svg>
<div class="r" style="left:358px;top:823px;width:1px;height:19px;background:#424242;"></div>
<svg class="r" style="left:368px;top:825px;" width="15" height="15" viewBox="0 0 15 15"><path d="M5.4 8.4V3.4Q5.4 0.8 7.6 0.8Q9.6 0.8 9.6 3M3.4 6.4L5.4 8.6L7.4 6.4" fill="none" stroke="#454545" stroke-width="1.1"/><path d="M0.4 9.8H14.4M0.4 12H9M0.4 14.2H14.4" stroke="#454545" stroke-width="1.1"/></svg>
<div class="r" style="left:389.5px;top:823px;width:1px;height:19px;background:#424242;"></div>
<svg class="r" style="left:399px;top:825px;" width="15" height="15" viewBox="0 0 15 15"><path d="M9.6 3.4H1.2M3.6 1L1.2 3.4L3.6 5.8" fill="none" stroke="#454545" stroke-width="1.1"/><path d="M3.4 9H14.4M3.4 11.4H14.4M3.4 13.8H14.4" stroke="#454545" stroke-width="1.3"/></svg>
<svg class="r" style="left:420.5px;top:825px;" width="15" height="15" viewBox="0 0 15 15"><path d="M0.8 3.4H9.2M6.8 1L9.2 3.4L6.8 5.8" fill="none" stroke="#454545" stroke-width="1.1"/><path d="M3 9H14M3 11.4H14M3 13.8H14" stroke="#454545" stroke-width="1.3"/></svg>
<div class="r" style="left:443.7px;top:823px;width:1px;height:19px;background:#424242;"></div>
<svg class="r" style="left:453px;top:825px;" width="16" height="15" viewBox="0 0 16 15"><path d="M1 0.8L5.4 5.2M5.4 0.8L1 5.2" stroke="#e8435a" stroke-width="1.4" fill="none"/><path d="M7.6 1H15M7.6 3.8H15M7.6 6.6H15" stroke="#d8d8d8" stroke-width="1.1"/><path d="M0.6 9.4H15M0.6 12.4H15" stroke="#d8d8d8" stroke-width="1.3"/></svg>
<div class="r" style="left:475.3px;top:823px;width:1px;height:19px;background:#424242;"></div>
<svg class="r" style="left:484px;top:825px;" width="17" height="16" viewBox="0 0 17 16"><text x="0.6" y="6.6" font-family="Liberation Sans, sans-serif" font-size="7.5" font-weight="bold" fill="#e0e0e0">ab</text><text x="0.8" y="12.6" font-family="Liberation Sans, sans-serif" font-size="7.5" font-weight="bold" fill="#e0e0e0">c</text><path d="M12 4.6H14.6V10.6H7.4M9.8 8.2L7.2 10.6L9.8 13" fill="none" stroke="#4aa8e8" stroke-width="1.3"/></svg>
<div class="r" style="left:506.2px;top:823px;width:1px;height:19px;background:#424242;"></div>
<svg class="r" style="left:516px;top:825px;" width="15" height="15" viewBox="0 0 15 15"><circle cx="7.5" cy="7.6" r="6.5" fill="none" stroke="#e0e0e0" stroke-width="1.2"/><path d="M7.3 3.8V8H11" fill="none" stroke="#e0e0e0" stroke-width="1.2"/></svg>
<div class="r" style="left:9px;top:846px;width:1039px;height:6px;background:#2c2c2c;"></div>
<div class="r" style="left:9px;top:846px;width:17px;height:6px;background:#333333;"></div>
<svg class="r" style="left:17px;top:848px;" width="4" height="4" viewBox="0 0 4 4"><path d="M3.6 0.4V3.6H0.4Z" fill="#8a8a8a"/></svg>
<div class="r" style="left:1012px;top:846px;width:17px;height:6px;background:#333333;"></div>
<svg class="r" style="left:1017.5px;top:847.6px;" width="4" height="5" viewBox="0 0 4 5"><path d="M0.3 0.3L3.6 2.8L0.3 4.4Z" fill="#777"/></svg>
<span class="t" style="left:6.95px;top:859.04px;font-size:12px;color:#e0e0e0;transform:scaleX(0.9491);">Error List</span>
<div class="r" style="left:7px;top:879px;width:46px;height:6px;background:#383838;"></div>
<div class="r" style="left:1px;top:885px;width:1270px;height:24px;background:#424242;border-radius:0 0 7px 7px;"></div>
<svg class="r" style="left:5px;top:889px;" width="17" height="16" viewBox="0 0 17 16"><path d="M1.4 0.7H14.8Q15.6 0.7 15.6 1.5V11Q15.6 11.8 14.8 11.8H10.4L8 14.6L5.6 11.8H1.4Q0.6 11.8 0.6 11V1.5Q0.6 0.7 1.4 0.7Z" fill="#505050" stroke="#e0e0e0" stroke-width="1.2" stroke-linejoin="round"/></svg>
<span class="t" style="left:28.76px;top:887.84px;font-size:12px;color:#ffffff;transform:scaleX(0.9363);">Ready</span>
<svg class="r" style="left:900px;top:890px;" width="12" height="13" viewBox="0 0 12 13"><path d="M5.6 13V1M0.8 5.8L5.6 1L10.4 5.8" fill="none" stroke="#f0f0f0" stroke-width="1.1"/></svg>
<span class="t" style="left:920.00px;top:887.84px;font-size:12px;color:#ffffff;transform:scaleX(1.0200);">Add to Source Control</span>
<svg class="r" style="left:1046px;top:895.6px;" width="7" height="4" viewBox="0 0 7 4"><path d="M0 4H7L3.5 0.2Z" fill="#f0f0f0"/></svg>
<svg class="r" style="left:1076px;top:891px;" width="15" height="14" viewBox="0 0 15 14"><path d="M0.6 0.7H13.4V3.4H0.6Z" fill="none" stroke="#e8e8e8" stroke-width="1.1"/><path d="M1.8 3.6V12.6H12.2V3.6" fill="none" stroke="#e8e8e8" stroke-width="1.1"/><path d="M5.4 3.6V9L7 7.6L8.6 9V3.6" fill="none" stroke="#e8e8e8" stroke-width="1.1"/></svg>
<span class="t" style="left:1097.02px;top:887.84px;font-size:12px;color:#ffffff;transform:scaleX(0.9658);">Select Repository</span>
<svg class="r" style="left:1194.6px;top:895.6px;" width="7" height="4" viewBox="0 0 7 4"><path d="M0 4H7L3.5 0.2Z" fill="#f0f0f0"/></svg>
<svg class="r" style="left:1226px;top:890px;" width="14" height="15" viewBox="0 0 14 15"><path d="M6.6 1.2Q2.8 1.6 2.8 5.8V9L1 11.4H12.2L10.4 9V5.8Q10.4 1.6 6.6 1.2Z" fill="none" stroke="#f0f0f0" stroke-width="1.2" stroke-linejoin="round"/><path d="M5 12.6Q6.6 14.4 8.2 12.6" fill="none" stroke="#f0f0f0" stroke-width="1.2"/></svg>
<svg class="r" style="left:1259px;top:897px;" width="9" height="9" viewBox="0 0 9 9"><rect x="8" y="0" width="1" height="1" fill="#b8b8b8"/><rect x="6" y="2" width="1" height="1" fill="#b8b8b8"/><rect x="8" y="2" width="1" height="1" fill="#b8b8b8"/><rect x="4" y="4" width="1" height="1" fill="#b8b8b8"/><rect x="6" y="4" width="1" height="1" fill="#b8b8b8"/><rect x="8" y="4" width="1" height="1" fill="#b8b8b8"/><rect x="2" y="6" width="1" height="1" fill="#b8b8b8"/><rect x="4" y="6" width="1" height="1" fill="#b8b8b8"/><rect x="6" y="6" width="1" height="1" fill="#b8b8b8"/><rect x="8" y="6" width="1" height="1" fill="#b8b8b8"/><rect x="0" y="8" width="1" height="1" fill="#b8b8b8"/><rect x="2" y="8" width="1" height="1" fill="#b8b8b8"/><rect x="4" y="8" width="1" height="1" fill="#b8b8b8"/><rect x="6" y="8" width="1" height="1" fill="#b8b8b8"/><rect x="8" y="8" width="1" height="1" fill="#b8b8b8"/><rect x="7" y="1" width="1" height="1" fill="#9a9a9a"/><rect x="5" y="3" width="1" height="1" fill="#9a9a9a"/><rect x="7" y="3" width="1" height="1" fill="#9a9a9a"/><rect x="3" y="5" width="1" height="1" fill="#9a9a9a"/><rect x="5" y="5" width="1" height="1" fill="#9a9a9a"/><rect x="7" y="5" width="1" height="1" fill="#9a9a9a"/><rect x="1" y="7" width="1" height="1" fill="#9a9a9a"/><rect x="3" y="7" width="1" height="1" fill="#9a9a9a"/><rect x="5" y="7" width="1" height="1" fill="#9a9a9a"/><rect x="7" y="7" width="1" height="1" fill="#9a9a9a"/></svg>
</body></html>
